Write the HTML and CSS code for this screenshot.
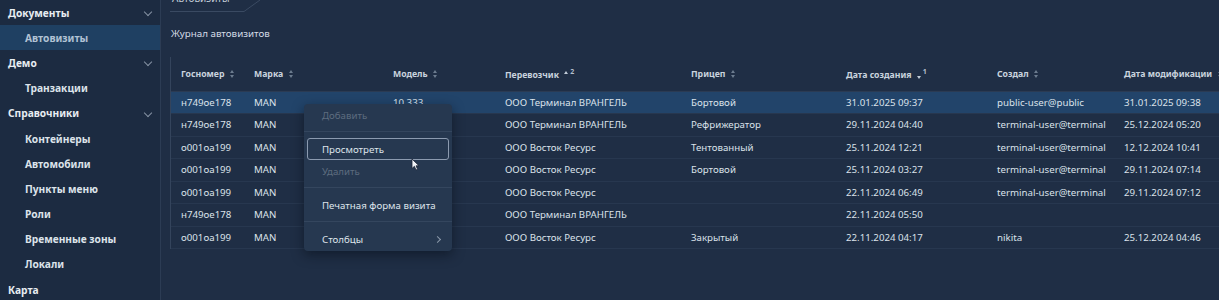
FILE: index.html
```html
<!DOCTYPE html>
<html lang="ru">
<head>
    <meta charset="UTF-8">
    <title>Журнал автовизитов</title>
    <link rel="stylesheet" href="styles.css">
</head>
<body>
<div class="app">
    <div class="sidebar">
        <div class="nav-group">Документы <span class="chev"></span></div>
        <div class="nav-item active">Автовизиты</div>
        <div class="nav-group">Демо <span class="chev"></span></div>
        <div class="nav-item">Транзакции</div>
        <div class="nav-group">Справочники <span class="chev"></span></div>
        <div class="nav-item">Контейнеры</div>
        <div class="nav-item">Автомобили</div>
        <div class="nav-item">Пункты меню</div>
        <div class="nav-item">Роли</div>
        <div class="nav-item">Временные зоны</div>
        <div class="nav-item">Локали</div>
        <div class="nav-group">Карта</div>
    </div>

    <div class="main">
        <div class="tabs">
            <div class="tab"><span class="tab-text">Автовизиты</span></div>
            <svg class="tab-edge" width="30" height="12" viewBox="0 0 30 12"><path d="M0 11.5 H8 L24 0" fill="none" stroke="#3a4a62" stroke-width="1"/></svg>
        </div>

        <h1 class="title">Журнал автовизитов</h1>

        <div class="panel">
            <table class="grid">
                <colgroup>
                    <col style="width:73px"><col style="width:139px"><col style="width:112px"><col style="width:186px">
                    <col style="width:155px"><col style="width:151px"><col style="width:127px"><col style="width:160px">
                </colgroup>
                <thead>
                    <tr>
                        <th>Госномер <span class="sort"></span></th>
                        <th>Марка <span class="sort"></span></th>
                        <th>Модель <span class="sort"></span></th>
                        <th>Перевозчик <span class="sort asc"></span><sup>2</sup></th>
                        <th>Прицеп <span class="sort"></span></th>
                        <th>Дата создания <span class="sort desc"></span><sup>1</sup></th>
                        <th>Создал <span class="sort"></span></th>
                        <th>Дата модификации <span class="sort"></span></th>
                    </tr>
                </thead>
                <tbody>
                    <tr class="selected">
                        <td>н749ое178</td><td>MAN</td><td>10 333</td><td>ООО Терминал ВРАНГЕЛЬ</td>
                        <td>Бортовой</td><td>31.01.2025 09:37</td><td>public-user@public</td><td>31.01.2025 09:38</td>
                    </tr>
                    <tr>
                        <td>н749ое178</td><td>MAN</td><td></td><td>ООО Терминал ВРАНГЕЛЬ</td>
                        <td>Рефрижератор</td><td>29.11.2024 04:40</td><td>terminal-user@terminal</td><td>25.12.2024 05:20</td>
                    </tr>
                    <tr>
                        <td>о001оа199</td><td>MAN</td><td></td><td>ООО Восток Ресурс</td>
                        <td>Тентованный</td><td>25.11.2024 12:21</td><td>terminal-user@terminal</td><td>12.12.2024 10:41</td>
                    </tr>
                    <tr>
                        <td>о001оа199</td><td>MAN</td><td></td><td>ООО Восток Ресурс</td>
                        <td>Бортовой</td><td>25.11.2024 03:27</td><td>terminal-user@terminal</td><td>29.11.2024 07:14</td>
                    </tr>
                    <tr>
                        <td>о001оа199</td><td>MAN</td><td></td><td>ООО Восток Ресурс</td>
                        <td></td><td>22.11.2024 06:49</td><td>terminal-user@terminal</td><td>29.11.2024 07:12</td>
                    </tr>
                    <tr>
                        <td>н749ое178</td><td>MAN</td><td></td><td>ООО Терминал ВРАНГЕЛЬ</td>
                        <td></td><td>22.11.2024 05:50</td><td></td><td></td>
                    </tr>
                    <tr>
                        <td>о001оа199</td><td>MAN</td><td></td><td>ООО Восток Ресурс</td>
                        <td>Закрытый</td><td>22.11.2024 04:17</td><td>nikita</td><td>25.12.2024 04:46</td>
                    </tr>
                </tbody>
            </table>
        </div>

        <div class="menu">
            <div class="menu-item disabled">Добавить</div>
            <div class="menu-sep"></div>
            <div class="menu-item focused">Просмотреть</div>
            <div class="menu-item disabled">Удалить</div>
            <div class="menu-sep"></div>
            <div class="menu-item">Печатная форма визита</div>
            <div class="menu-sep"></div>
            <div class="menu-item">Столбцы <span class="sub-arrow"></span></div>
        </div>

        <svg class="cursor" width="9" height="13" viewBox="0 0 9 13"><path d="M1 1 V10.5 L3.4 8.3 L5 12 L6.6 11.3 L5 7.8 H8 Z" fill="#f2f4f7" stroke="#1a2233" stroke-width="0.8"/></svg>
    </div>
</div>
</body>
</html>
```

FILE: styles.css
```css
* { box-sizing: border-box; }
body { margin: 0; background: #1f2e45; font-family: "Noto Sans", "Open Sans", sans-serif; color: #dbe2ea; overflow: hidden; }
.app { display: flex; height: 300px; }

/* sidebar */
.sidebar { width: 161px; flex: none; background: #1c2b41; border-right: 1px solid #2c3c54; }
.nav-group, .nav-item { height: 25.2px; display: flex; align-items: center; font-size: 10.2px; font-weight: 700; white-space: nowrap; }
.nav-group { padding-left: 8px; color: #e8edf2; position: relative; }
.nav-item { padding-left: 25px; color: #dce3ea; }
.nav-item.active { background: #1f4062; color: #b1c2d4; }
.chev { position: absolute; left: 145px; top: 9px; width: 6px; height: 6px; border-right: 1px solid #8592a3; border-bottom: 1px solid #8592a3; transform: rotate(45deg); }

/* main area */
.main { flex: 1; position: relative; padding-left: 9px; min-width: 0; overflow: hidden; }
.tabs { height: 12px; display: flex; align-items: flex-end; overflow: hidden; }
.tab { height: 12px; margin-left: -6px; padding: 0 6px 0 8px; border-bottom: 1px solid #3a4a62; overflow: hidden; }
.tab-text { display: block; margin-top: -9px; font-size: 10px; line-height: 14px; color: #c3cdd8; }
.tab-edge { flex: none; }
.title { margin: 15px 0 0 1px; height: 30px; font-size: 9.8px; font-weight: 400; color: #d4dce6; line-height: 14px; }

.panel { border-left: 1px solid #34445c; background: #1f2e45; }
.grid { border-collapse: collapse; table-layout: fixed; width: 1103px; }
.grid th, .grid td { text-align: left; padding: 0 0 0 10px; white-space: nowrap; overflow: hidden; }
.grid th { height: 34px; font-size: 8.7px; font-weight: 700; color: #c9d3de; border-bottom: 1px solid #2b3b53; }
.grid td { height: 22.5px; font-size: 9.7px; color: #dbe2ea; border-bottom: 1px solid #27374f; }
.grid tr.selected td { background: #22446a; }
.grid sup { font-size: 7px; color: #b3bfcc; margin-left: 1px; }

.sort { display: inline-block; width: 5px; height: 8px; margin-left: 3px; vertical-align: -1px; position: relative; }
.sort::before, .sort::after { content: ""; position: absolute; left: 0; border-left: 2.5px solid transparent; border-right: 2.5px solid transparent; }
.sort::before { top: 0; border-bottom: 3px solid #6c7c8f; }
.sort::after { bottom: 0; border-top: 3px solid #6c7c8f; }
.sort.asc::after, .sort.desc::before { display: none; }
.sort.asc::before { border-bottom-color: #c1ccd8; }
.sort.desc::after { border-top-color: #c1ccd8; }

/* context menu */
.menu { position: absolute; left: 143px; top: 104px; width: 148px; padding: 0 3px 1px; background: #263850; border-radius: 4px; box-shadow: 0 4px 12px rgba(8, 14, 26, 0.55); }
.menu-item { height: 22px; display: flex; align-items: center; padding-left: 15px; font-size: 9.7px; color: #dfe5ec; white-space: nowrap; position: relative; }
.menu-item.disabled { color: #5d6c7f; }
.menu-item.focused { border: 1px solid #8c9bb0; border-radius: 3px; padding-left: 14px; }
.menu-sep { height: 1px; background: #34465e; margin: 5px -3px 6px; }
.sub-arrow { position: absolute; left: 128px; top: 9px; width: 5px; height: 5px; border-right: 1px solid #8c99aa; border-top: 1px solid #8c99aa; transform: rotate(45deg); }

.cursor { position: absolute; left: 250px; top: 158px; }
```
